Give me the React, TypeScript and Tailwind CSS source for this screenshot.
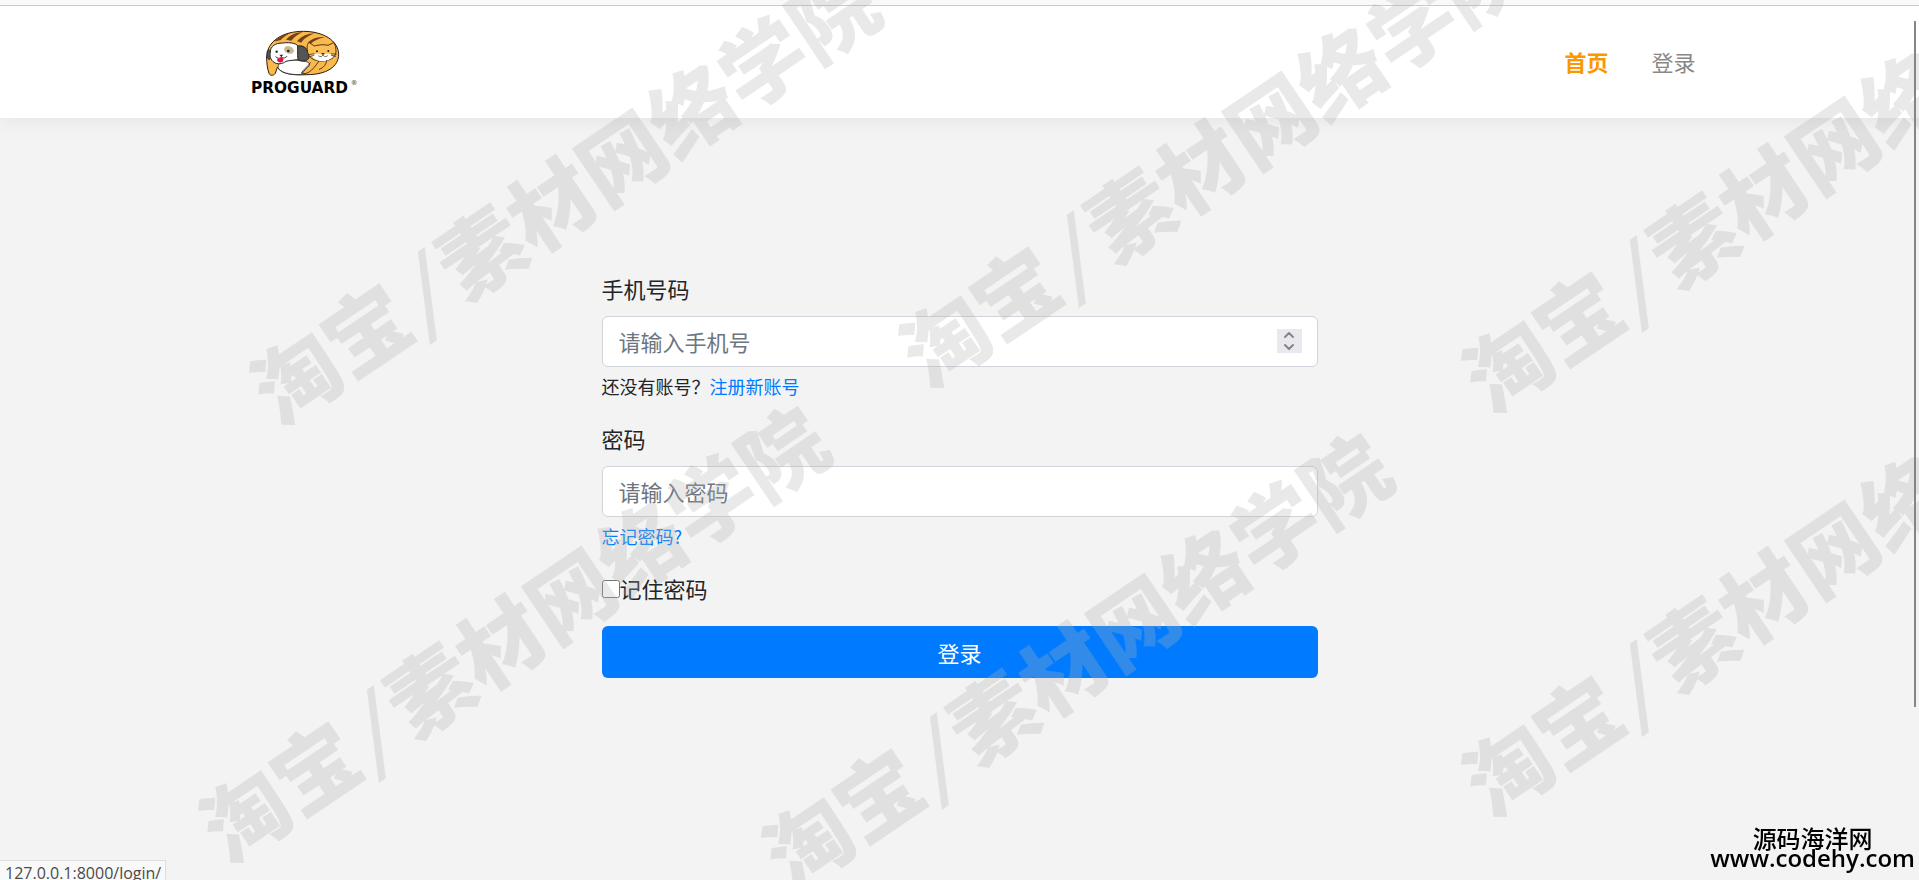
import { useState } from "react";
import type { FormEvent } from "react";
import { ChevronDown, ChevronUp } from "lucide-react";
import { clsx } from "clsx";

const navLinks = [
  { label: "首页", href: "#home", active: true },
  { label: "登录", href: "#login", active: false },
];

const watermarkPositions = [
  "left-[562px] top-[192px]",
  "left-[1211px] top-[155px]",
  "left-[1774px] top-[180px]",
  "left-[511px] top-[630px]",
  "left-[1074px] top-[657px]",
  "left-[1774px] top-[584px]",
];

function Logo() {
  return (
    <svg
      viewBox="30 24 330 204"
      className="h-[68px] w-[110px]"
      role="img"
      aria-label="PROGUARD"
      strokeLinecap="round"
      strokeLinejoin="round"
    >
      {/* curled body */}
      <path
        d="M80 112C80 62 130 34 190 34C250 34 295 62 296 103C296 140 260 164 200 164C165 166 125 164 112 142L106 160C100 168 90 168 87 160C82 146 80 130 80 112Z"
        fill="#f9b94c"
        stroke="#2b1a10"
        strokeWidth="3"
      />
      <path d="M102 64C118 50 134 43 152 39C140 45 130 52 122 60C114 62 108 64 102 64Z" fill="#74401a" />
      <path d="M138 59C150 45 168 37 188 36C172 44 162 52 154 62Z" fill="#74401a" />
      <path d="M171 64C184 48 204 40 224 40C204 48 192 56 184 68Z" fill="#74401a" />
      <path d="M203 68C216 56 234 49 254 52C236 56 224 62 214 70Z" fill="#74401a" />
      {/* dog */}
      <path d="M126 124C140 118 160 118 180 122C200 124 212 128 208 136C200 146 190 152 186 163C160 166 126 160 116 146C112 138 116 130 126 124Z" fill="#fff" stroke="#222" strokeWidth="2.5" />
      <path d="M90 96C92 78 106 69 128 69C152 66 174 70 177 84L178 116C168 122 150 120 138 124C128 132 112 134 102 127C92 120 88 108 90 96Z" fill="#fff" stroke="#222" strokeWidth="3" />
      <path d="M174 78C188 74 202 84 206 100C210 114 204 122 192 123C180 124 172 120 173 108Z" fill="#555" stroke="#222" strokeWidth="3" />
      <path d="M82 95C80 108 82 116 88 120L91 92C88 88 84 90 82 95Z" fill="#555" stroke="#222" strokeWidth="2" />
      <ellipse cx="147" cy="90" rx="15" ry="11" fill="#c5b795" transform="rotate(20 147 90)" />
      <circle cx="145" cy="93" r="4" fill="#222" />
      <circle cx="110" cy="95" r="3.5" fill="#222" />
      <path d="M118 104L130 104L124 110Z" fill="#222" />
      <path d="M124 108V113M107 110C112 116 120 116 124 112C130 116 138 114 141 109" fill="none" stroke="#222" strokeWidth="2.5" />
      <path d="M114 114C119 117 123 114 126 112C131 114 132 120 128 125C122 130 111 126 111 120Z" fill="#e5123f" />
      {/* cat */}
      <path d="M202 92C200 80 202 70 208 68L223 78C238 74 252 73 264 76L281 68C286 74 288 84 288 96C286 112 272 122 248 123C220 124 204 112 202 92Z" fill="#fbbf55" stroke="#2b1a10" strokeWidth="2.5" />
      <path d="M216 108C226 98 238 100 249 106C260 98 274 100 280 110C270 120 258 123 246 123C232 123 222 118 216 108Z" fill="#fff" />
      <circle cx="231" cy="94" r="3" fill="#222" />
      <circle cx="265" cy="93" r="3" fill="#222" />
      <path d="M236 108C242 112 247 110 249 104C251 110 258 112 263 107M207 104L222 101M209 110L222 106M274 101L289 103M274 106L287 109" fill="none" stroke="#222" strokeWidth="2" />
      <path d="M243 99L254 99L249 104Z" fill="#222" />
      {/* paws */}
      <path d="M211 128C202 142 190 148 184 159C198 166 216 155 236 124M238 148C252 142 258 134 260 122" fill="none" stroke="#2b1a10" strokeWidth="2.5" />
      <text x="33" y="219" fontSize="46" fontWeight="700" fill="#000" className="font-['DejaVu_Sans',sans-serif]">
        PROGUARD
      </text>
      <text x="332" y="194" fontSize="20" fill="#333" className="font-['DejaVu_Sans',sans-serif]">
        ®
      </text>
    </svg>
  );
}

function SiteHeader() {
  return (
    <header className="border-t border-[#c9c9ce] bg-white shadow-[0_0_20px_rgba(0,0,0,0.08)]">
      <div className="mx-auto flex h-28 max-w-[1472px] items-center justify-between pl-[26px]">
        <a href="#home">
          <Logo />
        </a>
        <nav className="flex gap-[43px] pb-[2px]">
          {navLinks.map((link) => (
            <a
              key={link.label}
              href={link.href}
              className={clsx(link.active ? "font-bold text-[#fb9700]" : "text-[#888888]")}
            >
              {link.label}
            </a>
          ))}
        </nav>
      </div>
    </header>
  );
}

const inputClass =
  "block h-[51px] w-full rounded-md border border-[#ced4da] bg-white px-4 pb-[2px] text-[#495057] outline-none placeholder:text-[#6c757d]";

function LoginForm() {
  const [phone, setPhone] = useState("");
  const [password, setPassword] = useState("");
  const [remember, setRemember] = useState(false);

  const stepPhone = (amount: number) => {
    setPhone((current) => String(Number(current) + amount));
  };

  const handleSubmit = (event: FormEvent) => {
    event.preventDefault();
  };

  return (
    <form onSubmit={handleSubmit} className="mx-auto w-full max-w-[716px]">
      <div className="mb-[22px]">
        <label htmlFor="phone" className="mb-[11px] block">
          手机号码
        </label>
        <div className="relative">
          <input
            id="phone"
            type="number"
            placeholder="请输入手机号"
            value={phone}
            onChange={(event) => setPhone(event.target.value)}
            className={clsx(inputClass, "[appearance:textfield]")}
          />
          <div className="absolute top-[13px] right-4 flex h-6 w-[25px] flex-col bg-[#e8e8ed] text-[#84848f]">
            <button type="button" aria-label="增加" onClick={() => stepPhone(1)} className="flex h-3 items-center justify-center">
              <ChevronUp size={16} strokeWidth={3} />
            </button>
            <button type="button" aria-label="减少" onClick={() => stepPhone(-1)} className="flex h-3 items-center justify-center">
              <ChevronDown size={16} strokeWidth={3} />
            </button>
          </div>
        </div>
        <p className="mt-[6px] text-[18px] leading-[27px]">
          还没有账号？
          <a href="#register" className="text-[#007bff]">
            注册新账号
          </a>
        </p>
      </div>

      <div className="mb-[22px]">
        <label htmlFor="password" className="mb-[11px] block">
          密码
        </label>
        <input
          id="password"
          type="password"
          placeholder="请输入密码"
          value={password}
          onChange={(event) => setPassword(event.target.value)}
          className={inputClass}
        />
        <p className="mt-[6px] text-[18px] leading-[27px]">
          <a href="#forgot" className="text-[#007bff]">
            忘记密码?
          </a>
        </p>
      </div>

      <div className="mb-[21px] flex items-center">
        <input
          id="remember"
          type="checkbox"
          checked={remember}
          onChange={(event) => setRemember(event.target.checked)}
          className="size-[18px]"
        />
        <label htmlFor="remember">记住密码</label>
      </div>

      <button type="submit" className="h-[52px] w-full rounded-md bg-[#007bff] text-white">
        登录
      </button>
    </form>
  );
}

function Watermarks() {
  return (
    <div aria-hidden="true" className="pointer-events-none absolute inset-0 overflow-hidden">
      {watermarkPositions.map((position) => (
        <span
          key={position}
          className={clsx(
            "absolute -translate-x-1/2 -translate-y-1/2 -rotate-[34deg] text-[85px] leading-none font-black whitespace-nowrap text-[#b2b2b2] opacity-[0.28]",
            position,
          )}
        >
          淘宝<span className="mr-4 ml-1 font-bold italic">/</span>素材网络学院
        </span>
      ))}
    </div>
  );
}

export default function App() {
  return (
    <div className="relative min-h-screen overflow-hidden bg-[#f3f3f3] pt-[5px] font-['Noto_Sans_CJK_SC',sans-serif] text-[22px] leading-[33px] text-[#212529]">
      <div className="absolute inset-x-0 top-0 h-[5px] bg-[#f9f9fb]" />
      <SiteHeader />
      <main className="px-4 pt-[154px] pb-16">
        <LoginForm />
      </main>

      <Watermarks />

      <div className="fixed top-[21px] right-[3px] h-[686px] w-[2px] bg-[#858585]" />
      <div className="fixed bottom-0 left-0 h-5 overflow-hidden border-t border-r border-[#dddddd] bg-[#f9f9f9] pr-1 pl-[5px] font-['Open_Sans',sans-serif] text-[16px] leading-[25px] text-[#4a4a4a]">
        127.0.0.1:8000/login/
      </div>
      <div className="fixed right-1 bottom-3 text-center font-medium text-black">
        <p className="text-[24px] leading-5">源码海洋网</p>
        <p className="font-['Open_Sans',sans-serif] text-[24px] leading-5 font-semibold">www.codehy.com</p>
      </div>
    </div>
  );
}
